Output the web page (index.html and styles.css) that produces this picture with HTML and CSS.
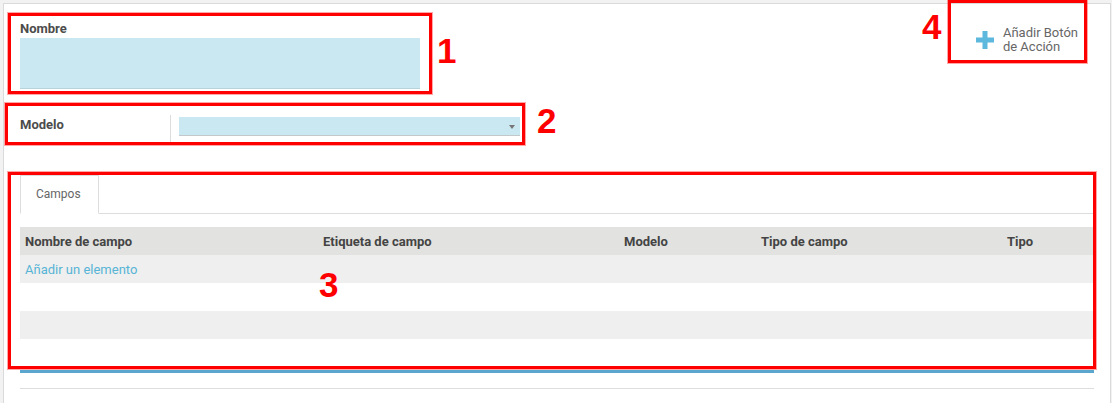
FILE: index.html
```html
<!DOCTYPE html>
<html lang="es">
<head>
  <meta charset="UTF-8">
  <meta name="viewport" content="width=device-width, initial-scale=1.0">
  <title>Acción de servidor</title>

  <link rel="stylesheet" href="styles.css">
</head>

<body>
  <div class="sheet">
    <div class="title-row">
      <div class="name-field">
        <label class="field-label">Nombre</label>
        <div class="name-input"></div>
      </div>
      <div class="action-button">
        <svg class="plus" width="18" height="18" viewBox="0 0 18 18">
          <rect x="6.5" y="0" width="5" height="18" fill="#5cb8dc"/>
          <rect x="0" y="6.5" width="18" height="5" fill="#5cb8dc"/>
        </svg>
        <span>Añadir Botón<br>de Acción</span>
      </div>
    </div>

    <div class="model-row">
      <div class="field-label model-label">Modelo</div>
      <div class="model-value">
        <div class="select"><span class="caret"></span></div>
      </div>
    </div>

    <ul class="tabs">
      <li class="tab">Campos</li>
    </ul>

    <table class="fields">
      <colgroup>
        <col style="width: 298px">
        <col style="width: 301px">
        <col style="width: 137px">
        <col style="width: 246px">
        <col>
      </colgroup>
      <thead>
        <tr>
          <th>Nombre de campo</th>
          <th>Etiqueta de campo</th>
          <th>Modelo</th>
          <th>Tipo de campo</th>
          <th>Tipo</th>
        </tr>
      </thead>
      <tbody>
        <tr class="odd"><td colspan="5"><a class="add-line">Añadir un elemento</a></td></tr>
        <tr><td colspan="5"></td></tr>
        <tr class="odd"><td colspan="5"></td></tr>
        <tr><td colspan="5"></td></tr>
      </tbody>
    </table>
    <div class="list-end"></div>
    <div class="separator"></div>
  </div>

  <!-- red annotations drawn over the screenshot -->
  <div class="annotations">
    <div class="mark mark-1"></div>
    <div class="mark mark-2"></div>
    <div class="mark mark-3"></div>
    <div class="mark mark-4"></div>
    <span class="num num-1">1</span>
    <span class="num num-2">2</span>
    <span class="num num-3">3</span>
    <span class="num num-4">4</span>
  </div>
</body>
</html>
```

FILE: styles.css
```css
* {
  box-sizing: border-box;
  margin: 0;
  padding: 0;
}

body {
  background: #f2f2f2;
  font-family: Roboto, "Liberation Sans", sans-serif;
  font-size: 13px;
  color: #4c4c4c;
  overflow: hidden;
}

/* Form sheet */
.sheet {
  margin: 3px 0 0 3px;
  width: 1108px;
  height: 420px;
  background: #fff;
  border: 1px solid #dadada;
  border-bottom: none;
  padding: 16px 16px 0 16px;
}

.title-row {
  display: flex;
  justify-content: space-between;
  align-items: flex-start;
}

.name-field {
  width: 400px;
}

.field-label {
  display: block;
  font-weight: bold;
  line-height: 18px;
  color: #4c4c4c;
}

.name-input {
  height: 51px;
  background: #c9e8f1;
  border-bottom: 1px solid #b8d3db;
}

.action-button {
  display: flex;
  align-items: center;
  gap: 9px;
  margin: 6px 16px 0 0;
  font-size: 13px;
  line-height: 14px;
  color: #666;
}

/* Modelo many2one */
.model-row {
  display: flex;
  margin-top: 26px;
}

.model-label {
  width: 150px;
  padding-top: 1px;
}

.model-value {
  border-left: 1px solid #ddd;
  height: 28px;
  padding: 2px 0 0 8px;
}

.select {
  width: 341px;
  height: 19px;
  background: #c9e8f1;
  border-bottom: 1px solid #c3c9cb;
  display: flex;
  justify-content: flex-end;
  align-items: center;
  padding-right: 5px;
}

.caret {
  border-left: 3.5px solid transparent;
  border-right: 3.5px solid transparent;
  border-top: 4px solid #777;
  margin-top: 2px;
}

/* Notebook */
.tabs {
  list-style: none;
  display: flex;
  margin-top: 32px;
  border-bottom: 1px solid #ddd;
}

.tab {
  width: 79px;
  height: 39px;
  margin-bottom: -1px;
  padding-left: 15px;
  border: 1px solid #ddd;
  border-bottom-color: #fff;
  background: #fff;
  font-size: 12px;
  line-height: 37px;
  color: #666;
}

/* One2many list */
.fields {
  width: 100%;
  margin-top: 13px;
  border-collapse: collapse;
  table-layout: fixed;
}

.fields th {
  height: 28px;
  padding: 0 5px;
  background: #e2e2e0;
  text-align: left;
  color: #444;
  font-weight: bold;
}

.fields td {
  height: 28px;
  padding: 0 5px;
}

.fields .odd td {
  background: #eeefee;
}

.add-line {
  color: #57b4d6;
}

.list-end {
  margin-top: 3px;
  border-top: 3px solid #5aa6cf;
}

.separator {
  margin-top: 15px;
  border-top: 1px solid #ddd;
}

/* Annotations */
.annotations {
  position: absolute;
  inset: 0;
  pointer-events: none;
}

.mark {
  position: absolute;
  border: 3px solid #f00;
  box-shadow: 0 0 0 1px rgba(255, 0, 0, 0.35);
}

.mark-1 { left: 8px;   top: 13px;  width: 424px;  height: 81px; }
.mark-2 { left: 5px;   top: 103px; width: 520px;  height: 42px; }
.mark-3 { left: 8px;   top: 172px; width: 1088px; height: 197px; }
.mark-4 { left: 948px; top: 0;     width: 139px;  height: 63px; }

.num {
  position: absolute;
  font-family: "Liberation Sans", Arial, sans-serif;
  font-weight: bold;
  font-size: 35px;
  line-height: 35px;
  color: #f00;
}

.num-1 { left: 437px; top: 33px; }
.num-2 { left: 537px; top: 103px; }
.num-3 { left: 319px; top: 267px; }
.num-4 { left: 922px; top: 9px; }
```
